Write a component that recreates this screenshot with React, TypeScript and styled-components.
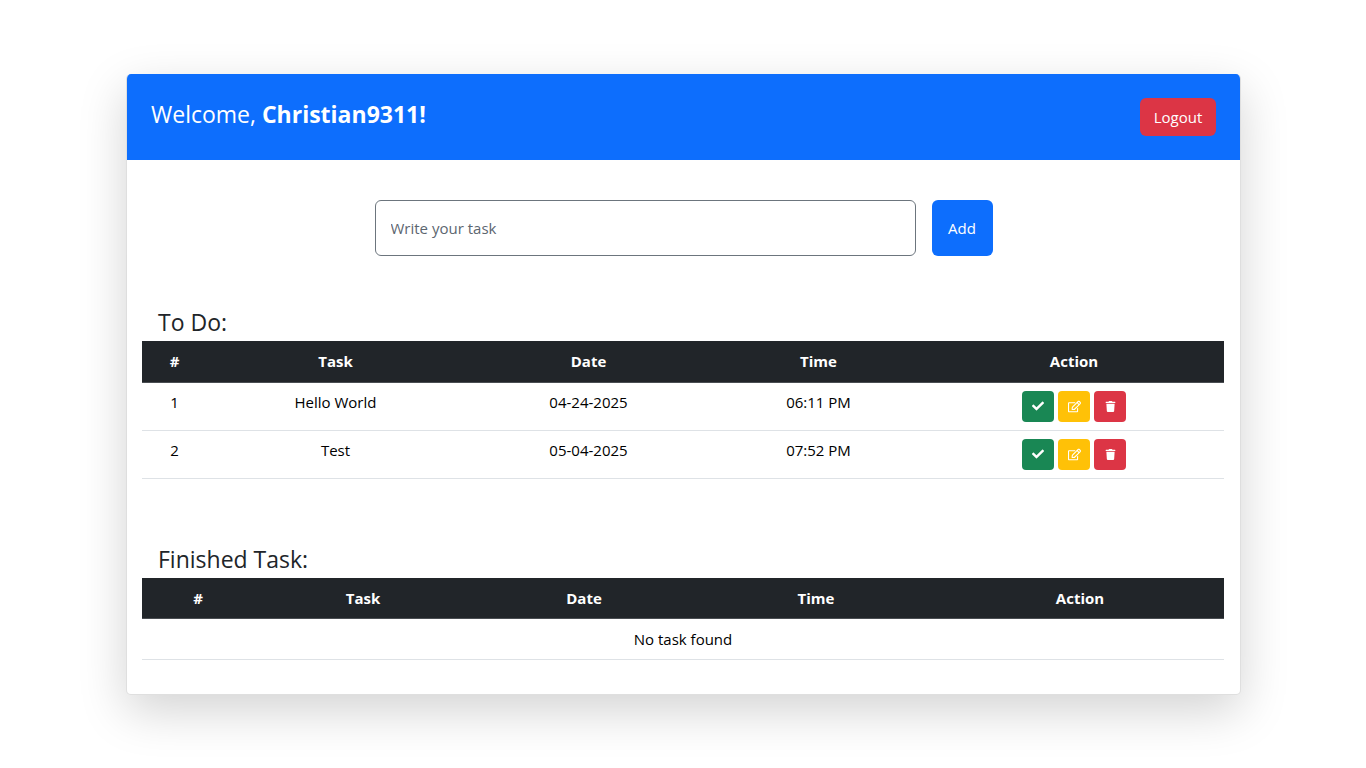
import styled, { createGlobalStyle } from 'styled-components';
import { FaCheck, FaRegEdit, FaTrash } from 'react-icons/fa';

const GlobalStyle = createGlobalStyle`
  * {
    box-sizing: border-box;
  }

  body {
    margin: 0;
    background: #fff;
    color: #212529;
    font-family: 'Open Sans', 'Noto Sans', sans-serif;
    font-size: 15px;
    line-height: 1.5;
  }
`;

const todoWidths = [65, 257, 249, 211, 300];
const finishedWidths = [112, 218, 224, 240, 288];
const headings = ['#', 'Task', 'Date', 'Time', 'Action'];

const tasks = [
  { id: 1, name: 'Hello World', date: '04-24-2025', time: '06:11 PM' },
  { id: 2, name: 'Test', date: '05-04-2025', time: '07:52 PM' },
];

const App = () => (
  <>
    <GlobalStyle />
    <Page>
      <Card>
        <Header>
          <Welcome>
            Welcome, <strong>Christian9311!</strong>
          </Welcome>
          <LogoutButton>Logout</LogoutButton>
        </Header>
        <Body>
          <TaskForm>
            <TaskInput placeholder="Write your task" />
            <AddButton>Add</AddButton>
          </TaskForm>

          <Section>
            <SectionTitle>To Do:</SectionTitle>
            <TaskTable>
              <colgroup>
                {todoWidths.map((w, i) => (
                  <col key={i} width={w} />
                ))}
              </colgroup>
              <thead>
                <tr>
                  {headings.map((h) => (
                    <Th key={h}>{h}</Th>
                  ))}
                </tr>
              </thead>
              <tbody>
                {tasks.map((task) => (
                  <tr key={task.id}>
                    <Td>{task.id}</Td>
                    <Td>{task.name}</Td>
                    <Td>{task.date}</Td>
                    <Td>{task.time}</Td>
                    <ActionCell>
                      <ActionGroup>
                        <IconButton $bg="#198754" $wide>
                          <FaCheck size={12} />
                        </IconButton>
                        <IconButton $bg="#ffc107">
                          <FaRegEdit size={13} />
                        </IconButton>
                        <IconButton $bg="#dc3545">
                          <FaTrash size={11} />
                        </IconButton>
                      </ActionGroup>
                    </ActionCell>
                  </tr>
                ))}
              </tbody>
            </TaskTable>
          </Section>

          <FinishedSection>
            <SectionTitle>Finished Task:</SectionTitle>
            <TaskTable>
              <colgroup>
                {finishedWidths.map((w, i) => (
                  <col key={i} width={w} />
                ))}
              </colgroup>
              <thead>
                <tr>
                  {headings.map((h) => (
                    <Th key={h}>{h}</Th>
                  ))}
                </tr>
              </thead>
              <tbody>
                <tr>
                  <EmptyCell colSpan={5}>No task found</EmptyCell>
                </tr>
              </tbody>
            </TaskTable>
          </FinishedSection>
        </Body>
      </Card>
    </Page>
  </>
);

export default App;

const Page = styled.div`
  padding: 74px 126px;
  min-height: 768px;
  overflow: hidden;
`;

const Card = styled.div`
  width: 1115px;
  height: 621px;
  background: #fff;
  border: 1px solid rgba(0, 0, 0, 0.125);
  border-top: 0;
  border-radius: 5px;
  box-shadow: 0 16px 48px rgba(0, 0, 0, 0.175);
  overflow: hidden;
`;

const Header = styled.div`
  height: 86px;
  background: #0d6efd;
  color: #fff;
  display: flex;
  align-items: flex-start;
  justify-content: space-between;
  padding: 24px 24px 0 24px;
`;

const Welcome = styled.h4`
  margin: 0;
  font-size: 23px;
  line-height: 32px;
  font-weight: 500;

  strong {
    font-weight: 700;
  }
`;

const LogoutButton = styled.button`
  width: 76px;
  height: 38px;
  border: 0;
  margin-right: 0;
  background: #dc3545;
  color: #fff;
  border-radius: 6px;
  font: inherit;
  margin-top: 0;
`;

const Body = styled.div`
  padding: 40px 15px 0 15px;
`;

const TaskForm = styled.div`
  display: flex;
  justify-content: center;
  gap: 16px;
  padding-right: 0;
`;

const TaskInput = styled.input`
  width: 541px;
  height: 56px;
  border: 1px solid #6c757d;
  border-radius: 6px;
  padding: 0 15px;
  font: inherit;

  &::placeholder {
    color: #5c6670;
  }
`;

const AddButton = styled.button`
  width: 61px;
  height: 56px;
  border: 0;
  border-radius: 6px;
  background: #0d6efd;
  color: #fff;
  font: inherit;
`;

const Section = styled.section`
  margin-top: 48px;
`;

const FinishedSection = styled.section`
  margin-top: 62px;
`;

const SectionTitle = styled.h4`
  margin: 0;
  padding-left: 16px;
  font-size: 23px;
  line-height: 37px;
  font-weight: 500;
`;

const TaskTable = styled.table`
  width: 1082px;
  border-collapse: collapse;
  table-layout: fixed;
  color: #000;
`;

const Th = styled.th`
  height: 41px;
  background: #212529;
  color: #fff;
  font-weight: 700;
  font-size: 15px;
  text-align: center;
  border-bottom: 1px solid #4a4e52;
`;

const Td = styled.td`
  height: 48px;
  padding: 0 0 8px 0;
  text-align: center;
  border-bottom: 1px solid #dee2e6;
`;

const ActionCell = styled(Td)`
  padding: 0;
`;

const EmptyCell = styled.td`
  height: 41px;
  text-align: center;
  border-bottom: 1px solid #dee2e6;
`;

const ActionGroup = styled.div`
  display: flex;
  justify-content: center;
  gap: 4px;
`;

const IconButton = styled.button<{ $bg: string; $wide?: boolean }>`
  width: ${({ $wide }) => ($wide ? '32px' : '32px')};
  height: 31px;
  padding: 0;
  border: 0;
  border-radius: 4px;
  background: ${({ $bg }) => $bg};
  color: #fff;
  display: flex;
  align-items: center;
  justify-content: center;
`;
